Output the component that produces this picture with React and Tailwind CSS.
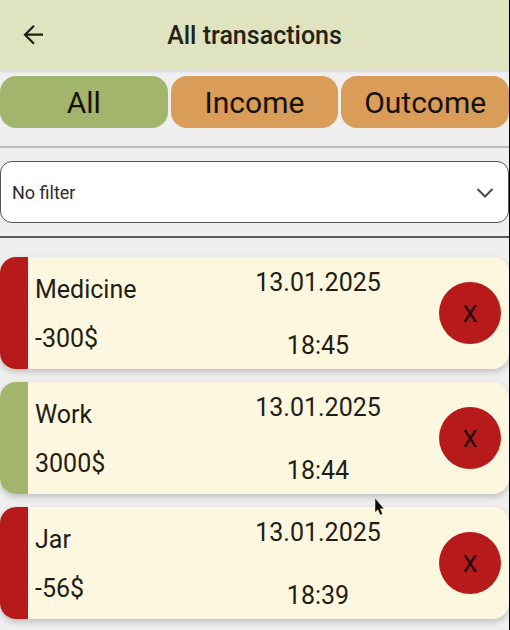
import { useState } from "react";

const tabs = ["All", "Income", "Outcome"];

const transactions = [
  { name: "Medicine", amount: "-300$", date: "13.01.2025", time: "18:45", income: false },
  { name: "Work", amount: "3000$", date: "13.01.2025", time: "18:44", income: true },
  { name: "Jar", amount: "-56$", date: "13.01.2025", time: "18:39", income: false },
];

function Header() {
  return (
    <header className="relative flex h-[70px] items-center justify-center bg-[#dfe3bf] shadow-[0_1px_3px_rgba(0,0,0,0.15)]">
      <button type="button" aria-label="Back" className="absolute left-5 flex size-7 items-center justify-center">
        <svg viewBox="0 0 28 28" className="size-7" fill="none" stroke="#1f1f14" strokeWidth="2.2">
          <path d="M23 13.700H5M14 4.700l-9 9 9 9" />
        </svg>
      </button>
      <h1 className="pt-0.5 text-[25px] leading-8 font-medium text-[#222216]">All transactions</h1>
    </header>
  );
}

function TransactionCard({ item }) {
  return (
    <li className="flex h-28 overflow-hidden rounded-2xl bg-[#fef7df] shadow-[0_3px_6px_rgba(0,0,0,0.2)]">
      <div className={item.income ? "w-7 shrink-0 bg-[#a3b46c]" : "w-7 shrink-0 bg-[#b61a1b]"} />
      <div className="grid flex-1 grid-cols-[192px_1fr_100px] pl-[7px]">
        <div className="flex flex-col justify-center gap-[17px] pt-0.5">
          <p>{item.name}</p>
          <p>{item.amount}</p>
        </div>
        <div className="flex flex-col items-center justify-between pt-[10px] pb-[7px]">
          <p>{item.date}</p>
          <p>{item.time}</p>
        </div>
        <div className="flex items-center justify-end pr-2">
          <button
            type="button"
            aria-label={`Delete ${item.name}`}
            className="flex size-[62px] items-center justify-center rounded-full bg-[#b61a1b] pt-0.5 text-[24px] text-[#1a0505]"
          >
            X
          </button>
        </div>
      </div>
    </li>
  );
}

export default function App() {
  const [active, setActive] = useState("All");
  return (
    <div className="min-h-screen border-r border-black bg-[#efefef] font-['Roboto',sans-serif] text-[#201e15]">
      <Header />
      <nav className="grid grid-cols-3 gap-[3px] pt-[6px]">
        {tabs.map((tab) => (
          <button
            key={tab}
            type="button"
            onClick={() => setActive(tab)}
            className={
              tab === active
                ? "h-[52px] rounded-2xl bg-[#a3b46c] pt-0.5 text-[30px] leading-9 text-[#151208]"
                : "h-[52px] rounded-2xl bg-[#d99c59] pt-0.5 text-[30px] leading-9 text-[#151208]"
            }
          >
            {tab}
          </button>
        ))}
      </nav>
      <div className="mt-[18px] border-y-2 border-t-[#bbbbbb] border-b-[#5a5a5a] py-[13px]">
        <div className="relative">
          <select
            aria-label="Filter"
            className="block h-[62px] w-full appearance-none rounded-xl border border-[#555555] bg-white px-[11px] text-[18px] text-[#2b2b2b]"
          >
            <option>No filter</option>
          </select>
          <svg
            viewBox="0 0 18 10"
            className="pointer-events-none absolute top-[27px] right-[15px] h-[10px] w-[18px]"
            fill="none"
            stroke="#4a4a4a"
            strokeWidth="2"
          >
            <path d="M1.5 1L9 8.5 16.5 1" />
          </svg>
        </div>
      </div>
      <main className="pt-[19px]">
        <ul className="flex flex-col gap-[13px] text-[25px] leading-8">
          {transactions.map((item) => (
            <TransactionCard key={item.time} item={item} />
          ))}
        </ul>
      </main>
      <svg viewBox="0 0 10 18" className="pointer-events-none absolute top-[498px] left-[374px] h-[18px] w-[10px]">
        <path d="M1 0V14.500L3.800 11.800L6.200 17L8.600 16L6.300 10.800H10Z" fill="#0a0a0a" stroke="#f5f0dc" strokeWidth="0.500" />
      </svg>
    </div>
  );
}
